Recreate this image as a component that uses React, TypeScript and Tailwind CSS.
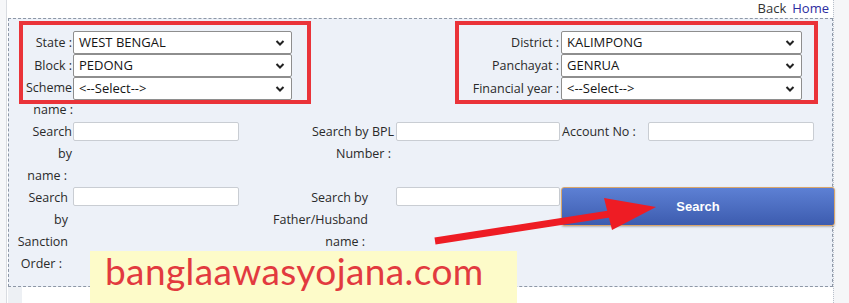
import React from 'react';

const Chevron = () => (
  <svg width="10" height="7" viewBox="0 0 10 7" className="absolute right-[6px] top-1/2 -translate-y-1/2">
    <path d="M1.5 1.5 L5 5 L8.5 1.5" fill="none" stroke="#222" strokeWidth="2" />
  </svg>
);

const Select: React.FC<{ value: string; width: string }> = ({ value, width }) => (
  <div className={`relative shrink-0 h-[23px] ${width} bg-white border border-[#8e8e8e] rounded-[2px]`}>
    <span className="block pl-[5px] leading-[21px] text-[13px] text-[#151515]">{value}</span>
    <Chevron />
  </div>
);

const TextBox: React.FC<{ width: string }> = ({ width }) => (
  <div className={`shrink-0 h-[19px] ${width} bg-white border border-[#c9cdd3] rounded-[2px]`} />
);

export default function App() {
  return (
    <div
      className="relative w-[849px] h-[303px] bg-white overflow-hidden text-[12.5px] text-[#2a2a2a]"
      style={{ fontFamily: '"Open Sans", "Noto Sans", sans-serif' }}
    >
      <div className="flex h-full">
        <div className="shrink-0 w-[7px] h-full bg-[#f6f7f9] border-r border-[#d9dce1]" />
        <div className="relative z-10 shrink-0 w-[826px] pl-[1px] flex flex-col">
          <div className="h-[18px] flex items-center justify-end gap-[6px] pr-[4px] text-[13px]">
            <span className="text-[#333]">Back</span>
            <span className="text-[#2c2ca0]">Home</span>
          </div>

          <div className="w-[825px] h-[269px] border border-dashed border-[#8d97a6] bg-[#edf1f8] pt-[12px]">
            {/* top selectors */}
            <div className="flex h-[23px]">
              <div className="shrink-0 w-[64px] text-right pr-[1px] leading-[23px]">State :</div>
              <Select value="WEST BENGAL" width="w-[219px]" />
              <div className="shrink-0 w-[269px] text-right pr-[2px] leading-[23px]">District :</div>
              <Select value="KALIMPONG" width="w-[241px]" />
            </div>
            <div className="flex h-[23px]">
              <div className="shrink-0 w-[64px] text-right pr-[1px] leading-[23px]">Block :</div>
              <Select value="PEDONG" width="w-[219px]" />
              <div className="shrink-0 w-[269px] text-right pr-[2px] leading-[23px]">Panchayat :</div>
              <Select value="GENRUA" width="w-[241px]" />
            </div>
            <div className="flex h-[44px] items-start">
              <div className="shrink-0 w-[64px] text-right leading-[22px]">
                <span className="block pr-[1px]">Scheme</span>
                <span className="block">name :</span>
              </div>
              <Select value="<--Select-->" width="w-[219px]" />
              <div className="shrink-0 w-[269px] text-right pr-[2px] leading-[23px]">Financial year :</div>
              <Select value="<--Select-->" width="w-[241px]" />
            </div>

            {/* search rows */}
            <div className="flex h-[66px] items-start">
              <div className="shrink-0 w-[64px] text-right leading-[22px]">
                <span className="block pr-[1px]">Search</span>
                <span className="block pr-[1px]">by</span>
                <span className="block pr-[6px]">name :</span>
              </div>
              <div className="pt-[1px]"><TextBox width="w-[166px]" /></div>
              <div className="shrink-0 w-[157px] text-right leading-[22px]">
                <span className="block pr-[2px]">Search by BPL</span>
                <span className="block pr-[5px]">Number :</span>
              </div>
              <div className="pt-[1px]"><TextBox width="w-[164px]" /></div>
              <div className="shrink-0 w-[88px] pl-[2px] leading-[22px]">Account No :</div>
              <div className="pt-[1px]"><TextBox width="w-[166px]" /></div>
            </div>
            <div className="flex h-[88px] items-start">
              <div className="shrink-0 w-[64px] text-right leading-[22px]">
                <span className="block pr-[5px]">Search</span>
                <span className="block pr-[5px]">by</span>
                <span className="block pr-[5px]">Sanction</span>
                <span className="block pr-[11px]">Order :</span>
              </div>
              <TextBox width="w-[166px]" />
              <div className="shrink-0 w-[157px] text-right leading-[22px]">
                <span className="block pr-[28px]">Search by</span>
                <span className="block pr-[28px]">Father/Husband</span>
                <span className="block pr-[31px]">name :</span>
              </div>
              <TextBox width="w-[164px]" />
              <button
                className="shrink-0 ml-[1px] w-[274px] h-[39px] rounded-[3px] border border-[#d9a66b] bg-linear-to-b from-[#5d80d4] to-[#3d5caf] text-white font-bold text-[13px] shadow-[0_1px_2px_rgba(0,0,0,0.25)]"
                style={{ fontFamily: '"Liberation Sans", Arial, sans-serif' }}
              >
                Search
              </button>
            </div>
          </div>

          <div className="flex flex-1">
            <div className="w-[14px] bg-[#edf0f4]" />
            <div className="flex-1 bg-white" />
          </div>
        </div>
        <div className="flex-1 h-full bg-[#f5f6f8] border-l border-dotted border-[#b9c0cb]" />
      </div>

      {/* annotations */}
      <div className="absolute z-20 left-[19px] top-[21px] w-[292px] h-[83px] border-4 border-[#ea3339]" />
      <div className="absolute z-20 left-[455px] top-[21px] w-[363px] h-[83px] border-4 border-[#ea3339]" />

      <div className="absolute z-20 left-[90px] top-[251px] w-[427px] h-[52px] bg-[#fdfbc9]">
        <span
          className="block pl-[15px] leading-[39px] text-[37px] tracking-[0.4px] text-[#e23a3f]"
          style={{ fontFamily: 'Lato, "Open Sans", sans-serif' }}
        >
          banglaawasyojana.com
        </span>
      </div>

      <svg className="absolute z-20 inset-0 pointer-events-none" width="849" height="303" viewBox="0 0 849 303">
        <line x1="435" y1="241" x2="616" y2="213" stroke="#ee1c24" strokeWidth="7" />
        <polygon points="604,198 656,207 612,230" fill="#ee1c24" />
      </svg>
    </div>
  );
}
